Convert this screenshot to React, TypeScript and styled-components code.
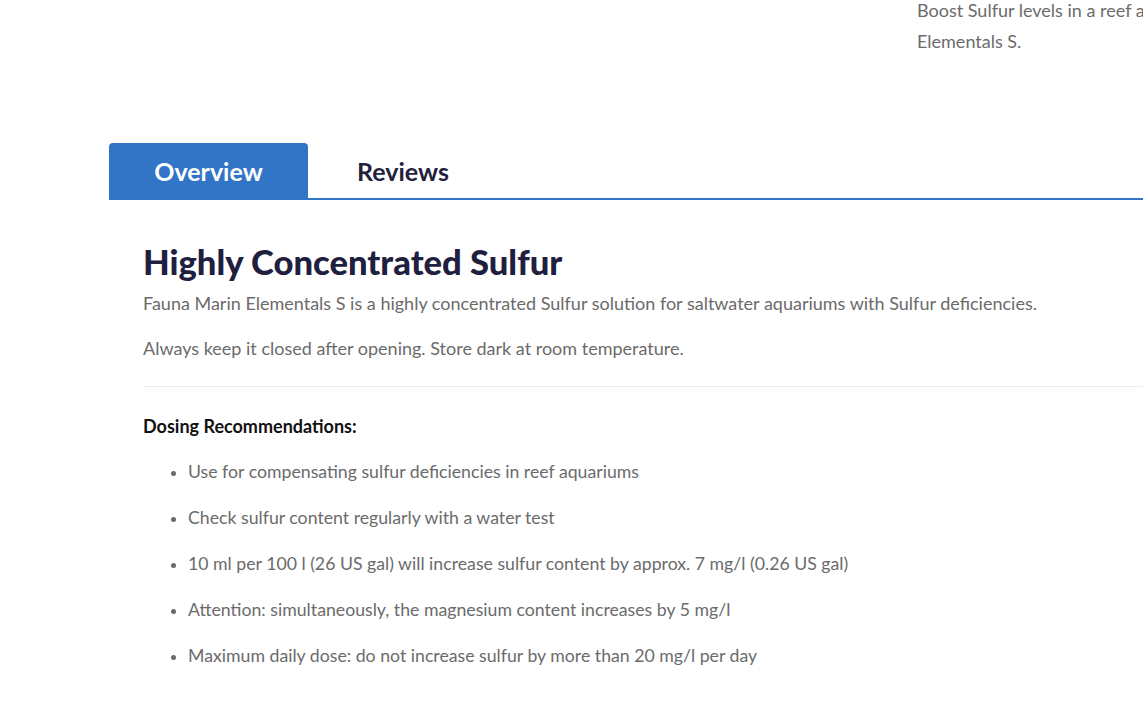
import styled, { createGlobalStyle } from "styled-components";

const GlobalStyle = createGlobalStyle`
    html, body {
        margin: 0;
        padding: 0;
        background: #fff;
        overflow: hidden;
    }
    body {
        font-family: Lato, "Open Sans", Arial, sans-serif;
        color: #666;
    }
`

const Page = styled.div`
    width: 1143px;
    height: 720px;
    overflow: hidden;
`

const TopRow = styled.div`
    display: flex;
    justify-content: flex-end;
    margin-top: -5px;
    width: 1420px;
`

const Summary = styled.p`
    margin: 0;
    width: 503px;
    font-size: 18px;
    line-height: 31px;
    color: #6b6b6b;
`

const TabArea = styled.div`
    margin: 86px 0 0 109px;
    width: 1100px;
`

const TabBar = styled.div`
    display: flex;
    border-bottom: 2px solid #3274c5;
`

const Tab = styled.button<{ $active?: boolean; $width: number }>`
    width: ${p => p.$width}px;
    height: 55px;
    border: 0;
    border-radius: 4px 4px 0 0;
    background: ${p => p.$active ? "#3274c5" : "transparent"};
    color: ${p => p.$active ? "#fff" : "#22223d"};
    font-family: Lato, sans-serif;
    font-weight: 700;
    font-size: 25px;
    padding: 0;
    cursor: pointer;
`

const Content = styled.div`
    padding: 40px 0 0 34px;
`

const Title = styled.h2`
    margin: 0 0 6px;
    font-size: 34.6px;
    line-height: 43px;
    font-weight: 900;
    color: #1f2040;
`

const Text = styled.p`
    margin: 0 0 16px;
    font-size: 18px;
    line-height: 29px;
    color: #6b6b6b;
`

const Divider = styled.hr`
    border: 0;
    border-top: 1px solid #ececec;
    margin: 23px 0 27px;
`

const Subhead = styled.h4`
    margin: 0;
    font-size: 18px;
    line-height: 24px;
    font-weight: 700;
    color: #111;
`

const List = styled.ul`
    margin: 21px 0 0;
    padding: 0 0 0 45px;
`

const Item = styled.li`
    font-size: 17.7px;
    line-height: 26px;
    color: #6b6b6b;
    margin-bottom: 20px;
    &::marker {
        font-size: 16px;
    }
`

const items = [
    "Use for compensating sulfur deficiencies in reef aquariums",
    "Check sulfur content regularly with a water test",
    "10 ml per 100 l (26 US gal) will increase sulfur content by approx. 7 mg/l (0.26 US gal)",
    "Attention: simultaneously, the magnesium content increases by 5 mg/l",
    "Maximum daily dose: do not increase sulfur by more than 20 mg/l per day",
]

const App = () => {
    return <>
        <GlobalStyle />
        <Page>
            <TopRow>
                <Summary>Boost Sulfur levels in a reef aquarium with Fauna Marin Elementals S.</Summary>
            </TopRow>
            <TabArea>
                <TabBar>
                    <Tab $active $width={199}>Overview</Tab>
                    <Tab $width={190}>Reviews</Tab>
                </TabBar>
                <Content>
                    <Title>Highly Concentrated Sulfur</Title>
                    <Text>Fauna Marin Elementals S is a highly concentrated Sulfur solution for saltwater aquariums with Sulfur deficiencies.</Text>
                    <Text>Always keep it closed after opening. Store dark at room temperature.</Text>
                    <Divider />
                    <Subhead>Dosing Recommendations:</Subhead>
                    <List>
                        {items.map((item, index) => (
                            <Item key={index}>{item}</Item>
                        ))}
                    </List>
                </Content>
            </TabArea>
        </Page>
    </>
}

export default App;
